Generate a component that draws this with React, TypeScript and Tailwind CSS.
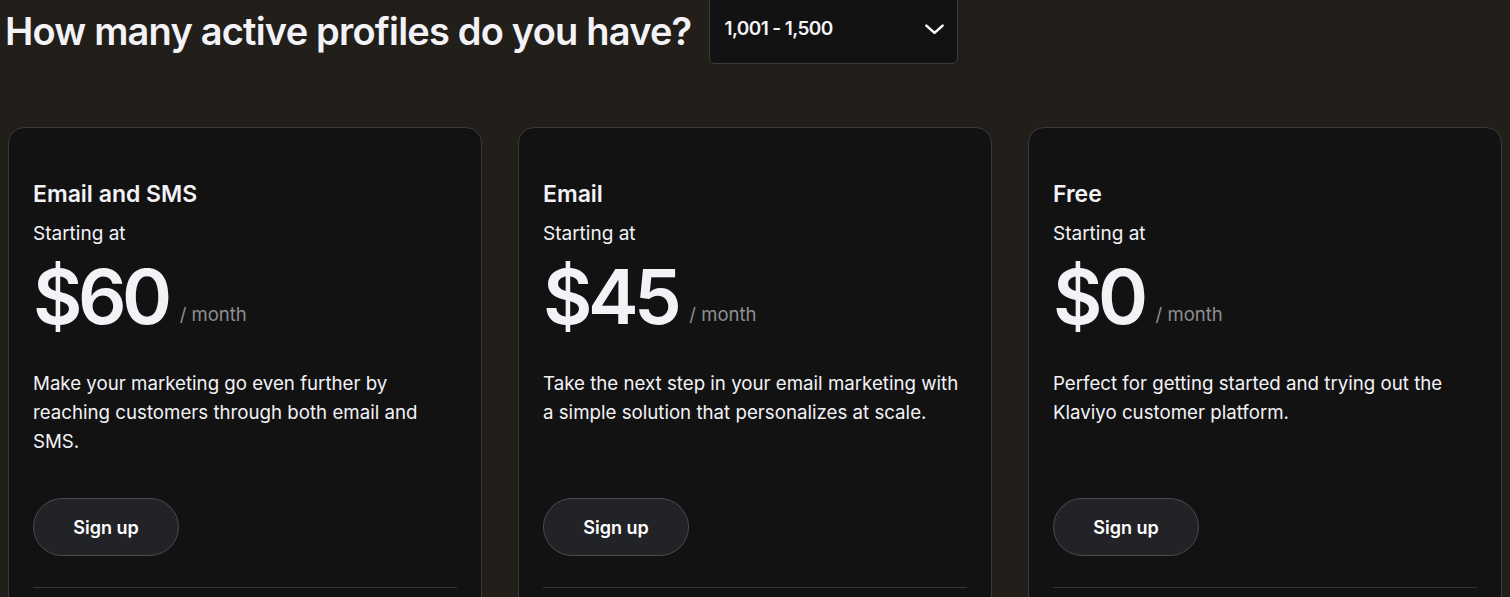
import type React from "react";

const plans = [
  {
    id: "email-sms",
    title: "Email and SMS",
    price: "$60",
    text: "Make your marketing go even further by reaching customers through both email and SMS.",
  },
  {
    id: "email",
    title: "Email",
    price: "$45",
    text: "Take the next step in your email marketing with a simple solution that personalizes at scale.",
  },
  {
    id: "free",
    title: "Free",
    price: "$0",
    text: "Perfect for getting started and trying out the Klaviyo customer platform.",
  },
];

const PlanCard: React.FC<{ plan: (typeof plans)[number] }> = ({ plan }) => (
  <div className="h-[520px] rounded-2xl border border-[#3a3a3a] bg-[#121212] px-[24px] pt-[52px]">
    <h3 className="text-[23px] font-semibold leading-7 text-[#f2f2f7]">
      {plan.title}
    </h3>
    <p className="mt-[14px] text-[19px] leading-6 text-[#f2f2f7]">
      Starting at
    </p>
    <div className="mt-[12px] flex items-end gap-3">
      <span className="text-[76px] font-semibold leading-[76px] tracking-[-4.5px] text-[#f2f2f7]">
        {plan.price}
      </span>
      <span className="mb-[5px] text-[18.5px] text-[#8e8e93]">/ month</span>
    </div>
    <p className="mt-[35px] h-[129px] text-[18.7px] leading-[29px] text-[#f2f2f7]">
      {plan.text}
    </p>
    <button className="h-[58px] w-[146px] rounded-full border border-[#4a4a4d] bg-[#222326] text-[18px] font-semibold text-white">
      Sign up
    </button>
    <div className="mt-[31px] border-t border-[#333335]" />
  </div>
);

export default function App() {
  return (
    <div
      className="h-[597px] overflow-hidden bg-[#221f1b]"
      style={{ fontFamily: "Inter, 'Noto Sans', sans-serif" }}
    >
      <div className="-mt-[9px] flex items-start gap-[18px] pl-[5px]">
        <h2 className="pt-[17px] text-[38px] font-semibold leading-[46px] tracking-[-0.8px] text-[#f2f2f7]">
          How many active profiles do you have?
        </h2>
        <button className="flex h-[73px] w-[249px] items-center justify-between rounded-md border border-[#3a3a3a] bg-[#121212] pl-[14px] pr-[11px] pt-[3px]">
          <span className="text-[19px] font-semibold tracking-[-0.6px] text-[#f2f2f7]">
            1,001 - 1,500
          </span>
          <svg width="23" height="23" viewBox="0 0 24 24" fill="none">
            <path
              d="M3.5 8l8.5 7.5 8.5-7.5"
              stroke="#ffffff"
              strokeWidth="2.6"
              strokeLinecap="round"
              strokeLinejoin="round"
            />
          </svg>
        </button>
      </div>
      <div className="mt-[63px] grid grid-cols-3 gap-9 px-2">
        {plans.map((plan) => (
          <PlanCard key={plan.id} plan={plan} />
        ))}
      </div>
    </div>
  );
}
